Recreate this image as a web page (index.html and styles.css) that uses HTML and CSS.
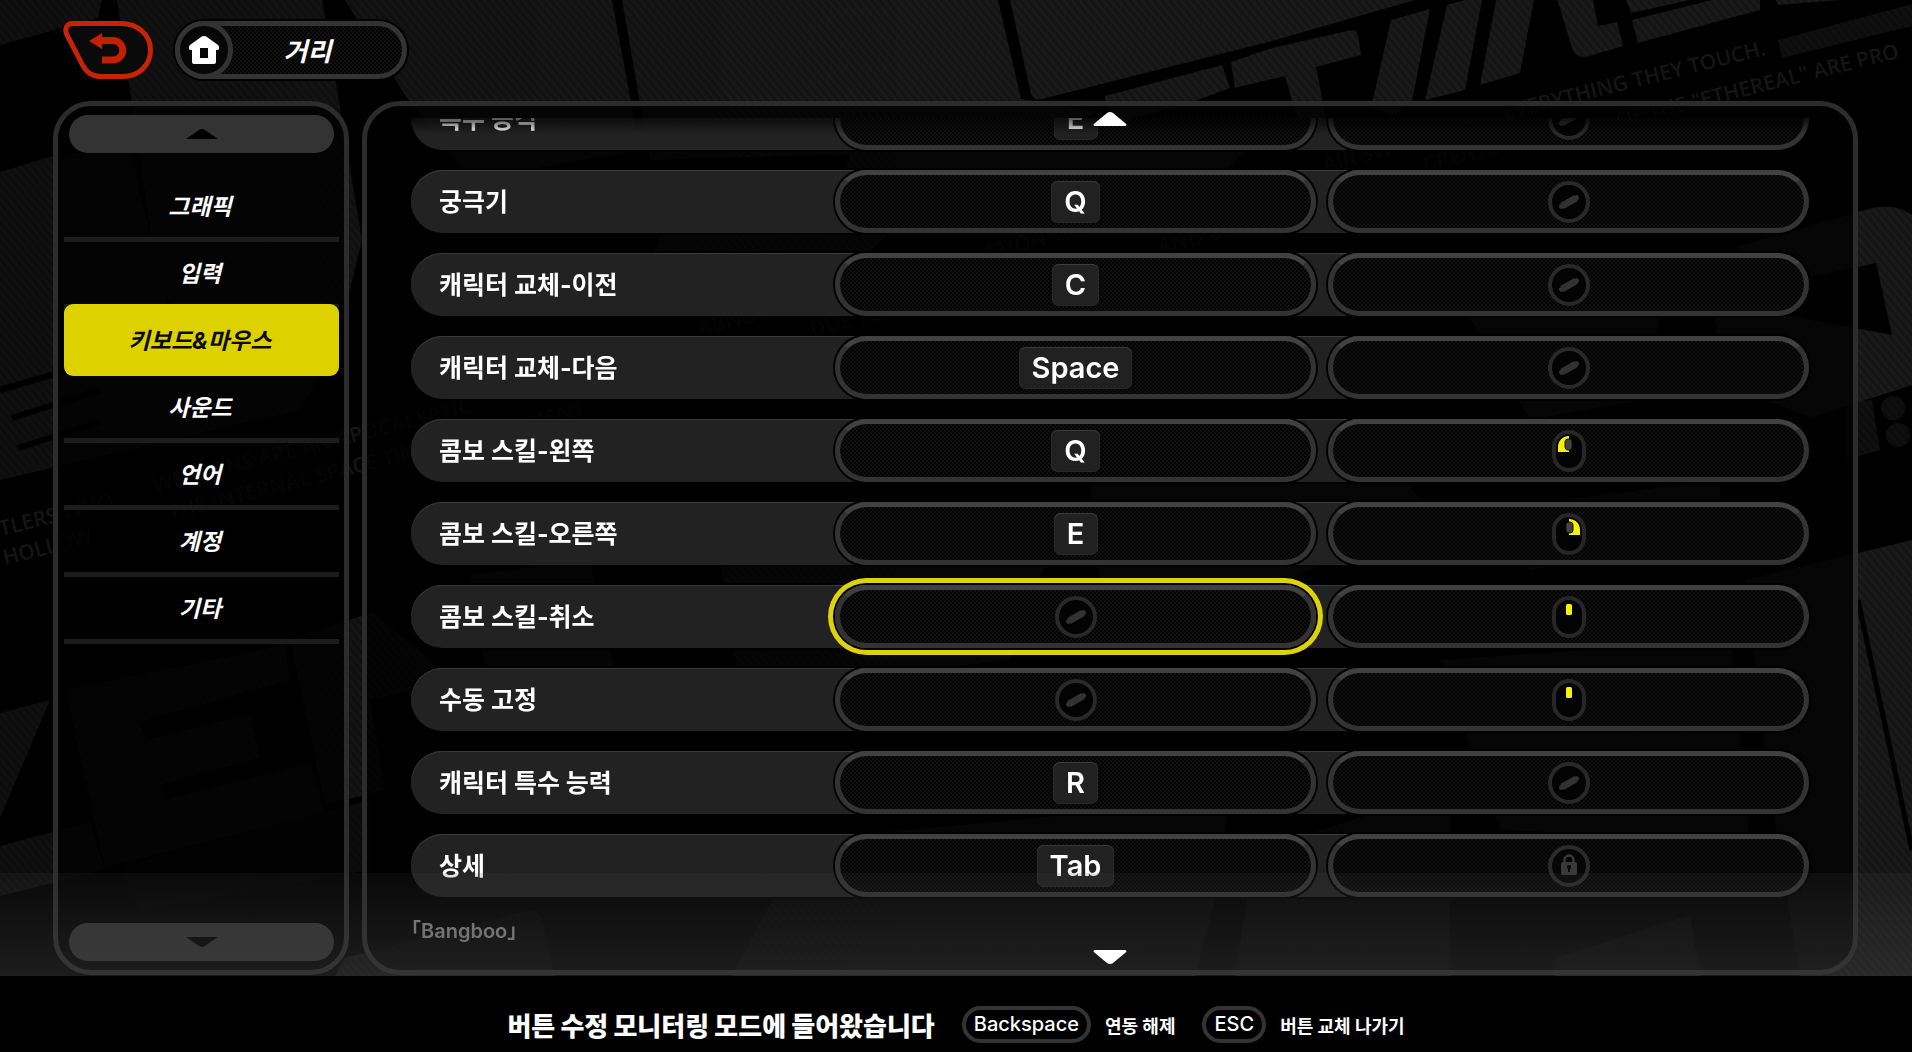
FILE: index.html
```html
<!DOCTYPE html>
<html lang="ko">
<head>
<meta charset="utf-8">
<title>키보드&amp;마우스</title>
<link rel="stylesheet" href="styles.css">
</head>
<body>
<svg class="defs" width="0" height="0" aria-hidden="true">
  <symbol id="none" viewBox="0 0 42 42">
    <circle cx="21" cy="21" r="19" fill="#030303" stroke="#292929" stroke-width="4"/>
    <path d="M14 25 28 17" stroke="#323232" stroke-width="7"/>
    <path d="M13.500 25.300 28.500 16.700" stroke="#323232" stroke-width="5" stroke-linecap="round"/>
  </symbol>
  <symbol id="lock" viewBox="0 0 42 42">
    <circle cx="21" cy="21" r="19" fill="#060606" stroke="#2b2b2b" stroke-width="4"/>
    <path d="M16.500 18v-3a4.500 4.500 0 0 1 9 0v3" fill="none" stroke="#3a3838" stroke-width="2.500"/>
    <rect x="13" y="17" width="16" height="13" rx="2" fill="#3a3838"/>
    <path d="M21 20a2 2 0 0 1 1 3.800V27h-2v-3.200A2 2 0 0 1 21 20z" fill="#0a0a0a"/>
  </symbol>
  <symbol id="mouse" viewBox="0 0 34 42">
    <rect x="2" y="2" width="30" height="38" rx="15" fill="#030303" stroke="#272727" stroke-width="4"/>
  </symbol>
  <symbol id="mouse-left" viewBox="0 0 34 42">
    <use href="#mouse"/>
    <path d="M17 6C10 6.500 6 11 6 17v5h11z" fill="#f7f100"/>
    <rect x="13" y="9" width="7" height="11" rx="3" fill="#444" stroke="#111"/>
  </symbol>
  <symbol id="mouse-right" viewBox="0 0 34 42">
    <use href="#mouse"/>
    <path d="M17 6c7 .5 11 5 11 11v5H17z" fill="#f7f100"/>
    <rect x="14" y="9" width="7" height="11" rx="3" fill="#444" stroke="#111"/>
  </symbol>
  <symbol id="mouse-middle" viewBox="0 0 34 42">
    <use href="#mouse"/>
    <rect x="14" y="8" width="6" height="11" rx="1.500" fill="#f7f100"/>
  </symbol>
</svg>

<div class="stage">
  <svg class="backdrop" viewBox="0 0 1912 976" preserveAspectRatio="xMidYMin slice" aria-hidden="true">
    <defs>
      <pattern id="stripes" width="6" height="6" patternUnits="userSpaceOnUse" patternTransform="rotate(-40)">
        <rect width="6" height="6" fill="#1a1a1a"/>
        <rect width="3" height="6" fill="#141414"/>
      </pattern>
      <linearGradient id="shade" x1="0" x2="1" y1="0" y2="0">
        <stop offset="0" stop-color="#000" stop-opacity=".4"/>
        <stop offset=".5" stop-color="#000" stop-opacity="0"/>
      </linearGradient>
    </defs>
    <g fill="url(#stripes)">
      <path d="M0 0H102L98 18 0 45z"/>
      <path d="M117 0H322L362 240 335 350 160 300z"/>
      <path d="M345 0H612L640 150 470 180 405 95z"/>
      <path d="M622 0H998L1021 99 1100 112 1000 150 650 160z"/>
      <path d="M1010 0H1415L1272 41 1042 99Q1034 101 1031 94z"/>
      <path d="M1105 96 1222 65 1230 88 1195 101 1110 125z"/>
      <path d="M1231 62 1272 48 1352 30Q1357 30 1358 36L1361 55 1316 67 1326 119H1297L1285 76 1235 88z"/>
      <path d="M1391 20 1430 9 1412 101 1395 115 1371 108z"/>
      <path d="M1447 5 1483-5 1465 90 1425 100z"/>
      <path d="M1497-5H1535L1520 73 1480 85z"/>
      <path d="M1556-5H1592L1598 26 1617 22 1623 46 1586 57Q1575 58 1572 48z"/>
      <path d="M1626 0H1690L1631 13z"/>
      <path d="M1632 20 1760-12V10L1638 43z"/>
      <path d="M1776 0H1840L1778 5z"/>
      <path d="M1778 40 1912 4V26L1782 58z" opacity=".6"/>
      <path d="M1735 247 1858 212Q1892 200 1912 215V385L1810 418 1720 380 1760 310 1892 335 1876 263 1812 277z"/>
      <path d="M1845 402 1872 400 1880 450 1845 460z" opacity=".6"/>
      <g opacity=".6"><circle cx="1893" cy="408" r="12"/><circle cx="1898" cy="435" r="12"/></g>
      <path d="M1470 318H1660L1640 400 1530 420z"/><path d="M1715 318H1780L1790 345 1725 400z"/>
      <path d="M660 235 910 210 860 262 650 262z"/><path d="M850 150 1270 130 1220 175 1000 215 840 200z"/>
      <path d="M1745 580 1912 540V976H1800L1770 790z"/>
      <path d="M0 172 52 156 130 148 170 320 340 340 300 410 0 480z"/>
      <path d="M0 713 50 700 0 818z"/>
      <path d="M0 846 90 822 105 870 0 896z"/>
      <path d="M65 690 285 645 290 680 140 722 146 740 250 714 260 758 160 785 165 800 310 763 325 812 105 868z"/>
      <path d="M290 640 372 612 455 680 370 700 385 790 325 805z"/>
      <path d="M120 866 370 800 370 870 140 910z" opacity=".6"/>
      <path d="M470 575 590 560 620 690 490 700z"/>
      <path d="M720 560 870 500 1070 500 1010 660 740 690z"/>
      <path d="M1090 480 1360 430 1430 510 1270 590 1100 585z"/>
      <path d="M1520 505 1720 480 1720 530 1530 570z"/>
      <path d="M1440 660 1730 640 1750 840 1500 830z"/>
      <path d="M345 958 525 911Q540 908 543 925L555 976H335z"/>
      <path d="M690 850 1230 800 1215 900 1195 976H732L775 895 690 880z"/>
      <path d="M1255 850 1450 790V976H1235z"/>
      <path d="M1555 958 1690 915 1700 976H1555z"/>
    </g>
    <g stroke="#000" fill="none">
      <path d="M1858 600 1912 850" stroke-width="5"/>
      <path d="M0 390 130 352M12 418 100 390M18 448 100 422" stroke-width="6"/>
    </g>
    <rect width="1912" height="976" fill="url(#shade)"/>
    <g class="backdrop-text">
      <text transform="translate(1505 120) rotate(-14)">EVERYTHING THEY TOUCH.</text>
      <text transform="translate(1618 128) rotate(-14)">OF THE "ETHEREAL" ARE PRO</text>
      <text transform="translate(1325 172) rotate(-14)">AIR SWALLOWS</text>
      <text transform="translate(1425 172) rotate(-14)">CREATURES</text>
      <text transform="translate(985 260) rotate(-14)">ATION THAT ARE</text>
      <text transform="translate(1160 254) rotate(-14)">AND DANGER</text>
      <text transform="translate(700 336) rotate(-14)">ABNORMAL</text>
      <text transform="translate(812 337) rotate(-14)">DUE TO UM</text>
      <text transform="translate(155 492) rotate(-14)">WEAPONS ARE AN APOCALYPTIC</text>
      <text transform="translate(170 520) rotate(-14)">THE INTERNAL SPACE TIME ENVIRONMENT</text>
      <text transform="translate(1 536) rotate(-14)">TLERS WHO</text>
      <text transform="translate(5 565) rotate(-14)">HOLLOW</text>
    </g>
  </svg>

  <header class="topbar">
    <button class="back" type="button" aria-label="뒤로">
      <svg width="90" height="58" viewBox="0 0 90 58">
        <path d="M10 2.500H58C75 2.500 87.500 14 87.500 29S76 55.500 60 55.500H37C28 55.500 23 51 19 43L4 14C1 7 4 2.500 10 2.500z" fill="#0a0a0a" stroke="#c82307" stroke-width="5"/>
        <path d="M37 19.500H50A9.500 9.500 0 0 1 50 39H39" fill="none" stroke="#c41f04" stroke-width="7"/>
        <path d="M26 20 39 12V28z" fill="#c41f04"/>
      </svg>
    </button>
    <button class="home texture" type="button">
      <span class="home-icon">
        <svg width="30" height="30" viewBox="0 0 30 30">
          <path d="M15 1Q17 1 18 2L29 10Q30 11 30 12V14Q30 15 28 15H27V27Q27 29 25 29H5Q3 29 3 27V15H2Q0 15 0 14V12Q0 11 1 10L12 2Q13 1 15 1zM11 13V23H19V13z" fill="#fff" fill-rule="evenodd"/>
        </svg>
      </span>
      <span class="home-label">거리</span>
    </button>
  </header>

  <main class="panels">
    <aside class="panel sidebar">
      <button class="scroll" type="button" aria-label="위로">
        <svg width="34" height="12" viewBox="0 0 34 12"><path d="M1 11 14 2Q17 0 20 2L33 11z" fill="#000"/></svg>
      </button>
      <nav class="tabs">
        <button class="tab" type="button">그래픽</button>
        <button class="tab" type="button">입력</button>
        <button class="tab is-active" type="button" aria-current="page">키보드&amp;마우스</button>
        <button class="tab" type="button">사운드</button>
        <button class="tab" type="button">언어</button>
        <button class="tab" type="button">계정</button>
        <button class="tab" type="button">기타</button>
      </nav>
      <button class="scroll" type="button" aria-label="아래로">
        <svg width="34" height="12" viewBox="0 0 34 12"><path d="M1 1 14 10Q17 12 20 10L33 1z" fill="#000"/></svg>
      </button>
    </aside>

    <section class="panel bindings">
      <div class="list">
        <div class="row"><span class="name">특수 공격</span><button class="slot texture" type="button"><kbd>E</kbd></button><button class="slot texture" type="button" aria-label="없음"><svg class="round"><use href="#none"/></svg></button></div>
        <div class="row"><span class="name">궁극기</span><button class="slot texture" type="button"><kbd>Q</kbd></button><button class="slot texture" type="button" aria-label="없음"><svg class="round"><use href="#none"/></svg></button></div>
        <div class="row"><span class="name">캐릭터 교체-이전</span><button class="slot texture" type="button"><kbd>C</kbd></button><button class="slot texture" type="button" aria-label="없음"><svg class="round"><use href="#none"/></svg></button></div>
        <div class="row"><span class="name">캐릭터 교체-다음</span><button class="slot texture" type="button"><kbd>Space</kbd></button><button class="slot texture" type="button" aria-label="없음"><svg class="round"><use href="#none"/></svg></button></div>
        <div class="row"><span class="name">콤보 스킬-왼쪽</span><button class="slot texture" type="button"><kbd>Q</kbd></button><button class="slot texture" type="button" aria-label="마우스 왼쪽"><svg class="mouse"><use href="#mouse-left"/></svg></button></div>
        <div class="row"><span class="name">콤보 스킬-오른쪽</span><button class="slot texture" type="button"><kbd>E</kbd></button><button class="slot texture" type="button" aria-label="마우스 오른쪽"><svg class="mouse"><use href="#mouse-right"/></svg></button></div>
        <div class="row"><span class="name">콤보 스킬-취소</span><button class="slot texture is-selected" type="button" aria-label="없음"><svg class="round"><use href="#none"/></svg></button><button class="slot texture" type="button" aria-label="마우스 휠"><svg class="mouse"><use href="#mouse-middle"/></svg></button></div>
        <div class="row"><span class="name">수동 고정</span><button class="slot texture" type="button" aria-label="없음"><svg class="round"><use href="#none"/></svg></button><button class="slot texture" type="button" aria-label="마우스 휠"><svg class="mouse"><use href="#mouse-middle"/></svg></button></div>
        <div class="row"><span class="name">캐릭터 특수 능력</span><button class="slot texture" type="button"><kbd>R</kbd></button><button class="slot texture" type="button" aria-label="없음"><svg class="round"><use href="#none"/></svg></button></div>
        <div class="row"><span class="name">상세</span><button class="slot texture" type="button"><kbd>Tab</kbd></button><button class="slot texture" type="button" aria-label="잠김"><svg class="round"><use href="#lock"/></svg></button></div>
        <h2 class="group">「Bangboo」</h2>
      </div>
      <svg class="more more-up" viewBox="0 0 34 14" aria-hidden="true"><path d="M2 14Q-1 13 2 11L14 1Q17-1 20 1L32 11Q35 13 32 14z" fill="#fff"/></svg>
      <svg class="more more-down" viewBox="0 0 34 14" aria-hidden="true"><path d="M2 0Q-1 1 2 3L14 13Q17 15 20 13L32 3Q35 1 32 0z" fill="#fff"/></svg>
    </section>
  </main>
  <div class="glow"></div>
</div>

<footer class="hints">
  <strong class="message">버튼 수정 모니터링 모드에 들어왔습니다</strong>
  <button class="hint" type="button"><span class="cap">Backspace</span>연동 해제</button>
  <button class="hint" type="button"><span class="cap">ESC</span>버튼 교체 나가기</button>
</footer>
</body>
</html>
```
FILE: styles.css
```css
* {
  box-sizing: border-box;
}

body {
  margin: 0;
  min-height: 100vh;
  display: flex;
  flex-direction: column;
  background: #000;
  color: #fff;
  font-family: Inter, "Noto Sans CJK KR", sans-serif;
  font-weight: 700;
  overflow: hidden;
}

button {
  margin: 0;
  padding: 0;
  border: 0;
  background: none;
  color: inherit;
  font: inherit;
}

.defs {
  position: absolute;
}

.stage {
  position: relative;
  flex: 1;
  display: flex;
  flex-direction: column;
}

.backdrop {
  position: absolute;
  inset: 0;
  width: 100%;
  height: 100%;
}

.backdrop-text {
  fill: #151515;
  font-family: "Open Sans", sans-serif;
  font-size: 21px;
  font-weight: 600;
}

.texture {
  background: repeating-conic-gradient(#101010 0 25%, #030303 0 50%) 0 0 / 4px 4px padding-box;
}

/* Top bar */

.topbar {
  position: relative;
  display: flex;
  gap: 22px;
  padding: 21px 63px 0;
}

.back,
.back svg {
  display: block;
}

.home {
  display: flex;
  align-items: center;
  width: 232px;
  height: 58px;
  border: 5px solid #333;
  border-radius: 29px;
  box-shadow: 0 0 0 2px #000;
}

.home-icon {
  display: flex;
  align-items: center;
  justify-content: center;
  width: 58px;
  height: 58px;
  margin-left: -5px;
  border: 5px solid #333;
  border-radius: 50%;
  background: #060606;
}

.home-label {
  flex: 1;
  padding: 0 20px 2px 0;
  font-size: 26px;
  font-style: italic;
}

/* Panels */

.panels {
  position: relative;
  flex: 1;
  display: flex;
  gap: 13px;
  padding: 22px 54px 1px 53px;
}

.panel {
  border: 5px solid #2c2c2c;
  border-radius: 38px;
  background: rgba(0, 0, 0, .75);
}

.sidebar {
  display: flex;
  flex-direction: column;
  flex: none;
  width: 296px;
  padding: 9px 5px 9px 6px;
}

.scroll {
  display: flex;
  align-items: center;
  justify-content: center;
  height: 38px;
  margin: 0 5px;
  border-radius: 19px;
  background: #333;
}

.tabs {
  flex: 1;
  display: flex;
  flex-direction: column;
  margin-top: 22px;
}

.tab {
  height: 67px;
  padding: 0 3px 2px 0;
  border-bottom: 5px solid #1c1c1c;
  font-size: 23px;
  font-style: italic;
}

.tab.is-active {
  height: 72px;
  margin-top: -5px;
  border: 0;
  border-radius: 9px;
  background: #ddd200;
  color: #0b0b00;
}

/* Key bindings */

.bindings {
  position: relative;
  flex: 1;
  display: flex;
  padding-top: 12px;
}

.list {
  flex: 1;
  display: flex;
  flex-direction: column;
  gap: 20px;
  overflow: hidden;
  padding: 0 44px;
  mask-image: linear-gradient(rgba(0, 0, 0, .3), #000 16px);
}

.row {
  flex: none;
  display: grid;
  grid-template-columns: 412px 1fr 1fr;
  gap: 12px;
  height: 63px;
  border-radius: 32px;
  background: #222;
  box-shadow: inset 0 1px #3a3a3a, 0 0 0 2px #000;
}

.row:first-child {
  margin-top: -31px;
}

.name {
  align-self: center;
  padding: 0 0 3px 28px;
  font-size: 25px;
}

.slot {
  display: flex;
  align-items: center;
  justify-content: center;
  border: 5px solid #333;
  border-top-color: #414141;
  border-radius: 32px;
  box-shadow: 0 0 0 2px #000;
}

.slot.is-selected {
  box-shadow: 0 0 0 2px #000, 0 0 0 7px #ddd20c;
}

kbd {
  min-width: 44px;
  padding: 0 13px;
  border-radius: 7px;
  background: #212122;
  box-shadow: inset 0 1px #3c3c3c, inset 0 0 0 1px #282828;
  font-family: Inter, sans-serif;
  font-size: 29px;
  font-weight: 600;
  line-height: 42px;
}

.round {
  width: 42px;
  height: 42px;
}

.mouse {
  width: 34px;
  height: 42px;
}

.group {
  margin: 0;
  color: #8c8c8c;
  font-family: Inter, "Noto Sans CJK KR", sans-serif;
  font-feature-settings: "halt";
  font-size: 20px;
  font-weight: 600;
  line-height: 28px;
}

.more {
  position: absolute;
  z-index: 1;
  left: 50%;
  width: 34px;
  height: 14px;
  transform: translateX(-50%);
}

.more-up {
  top: 6px;
}

.more-down {
  bottom: 6px;
}

.glow {
  position: absolute;
  inset: auto 0 0;
  height: 103px;
  background: linear-gradient(rgba(64, 64, 64, .14), rgba(64, 64, 64, .45));
  pointer-events: none;
}

/* Footer hints */

.hints {
  display: flex;
  align-items: center;
  justify-content: center;
  gap: 27px;
  height: 76px;
  padding-top: 21px;
  background: #000;
}

.message {
  font-size: 26px;
}

.hint {
  display: flex;
  align-items: center;
  gap: 14px;
  font-size: 18px;
}

.cap {
  padding: 0 8px;
  border: 4px solid #333;
  border-radius: 19px;
  font-size: 20px;
  font-weight: 500;
  line-height: 29px;
}
```
